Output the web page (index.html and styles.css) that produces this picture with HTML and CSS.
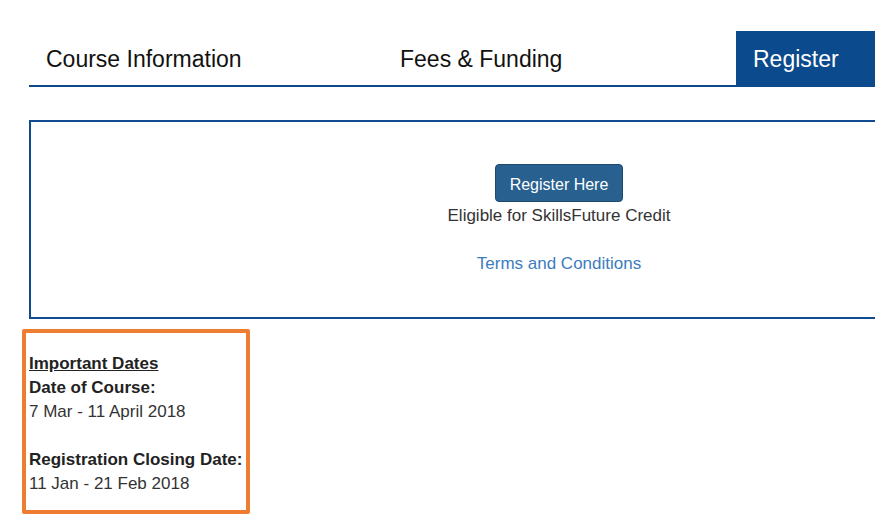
FILE: index.html
```html
<!DOCTYPE html>
<html>
<head>
<meta charset="utf-8">
<link rel="stylesheet" href="styles.css">
</head>
<body>
<div class="page">
  <nav class="tabs">
    <div class="tab">Course Information</div>
    <div class="tab">Fees &amp; Funding</div>
    <div class="tab active">Register</div>
  </nav>
  <section class="register-box">
    <button class="btn">Register Here</button>
    <div class="line">Eligible for SkillsFuture Credit</div>
    <div class="line blank">&nbsp;</div>
    <div class="line"><a class="link" href="#">Terms and Conditions</a></div>
  </section>
  <div class="dates">
    <div class="line"><b><u>Important Dates</u></b></div>
    <div class="line"><b>Date of Course:</b></div>
    <div class="line">7 Mar - 11 April 2018</div>
    <div class="line">&nbsp;</div>
    <div class="line"><b>Registration Closing Date:</b></div>
    <div class="line">11 Jan - 21 Feb 2018</div>
  </div>
</div>
</body>
</html>
```
FILE: styles.css
```css
html, body {
  margin: 0;
  padding: 0;
  background: #fff;
  overflow: hidden;
}
body {
  font-family: "Liberation Sans", Arial, sans-serif;
  color: #333;
  font-size: 17px;
  line-height: 24px;
}
.page {
  width: 1060px;
  padding: 31px 0 0 29px;
}
.tabs {
  display: grid;
  grid-template-columns: 354px 353px 353px;
  border-bottom: 2px solid #0c4a8c;
}
.tab {
  height: 54px;
  box-sizing: border-box;
  padding-top: 2px;
  display: flex;
  align-items: center;
  padding-left: 17px;
  font-size: 23px;
  color: #111;
}
.tab.active {
  background: #0b4a8c;
  color: #fff;
}
.register-box {
  margin-top: 33px;
  border: 2px solid #0f4b8e;
  padding-top: 42px;
  box-sizing: border-box;
  height: 199px;
  display: flex;
  flex-direction: column;
  align-items: center;
}
.btn {
  font-family: "Liberation Sans", Arial, sans-serif;
  font-size: 16px;
  line-height: 22px;
  white-space: nowrap;
  color: #fff;
  background: #286090;
  border: 1px solid #1f4a70;
  border-radius: 4px;
  padding: 9px 14px 5px;
  height: 38px;
  margin-bottom: 1px;
}
.line {
  white-space: nowrap;
}
.register-box .line {
  position: relative;
  top: 1px;
}
.link {
  color: #3d7cbd;
  text-decoration: none;
}
.dates {
  display: inline-block;
  margin: 10px 0 0 -7px;
  border: 4px solid #ed7d31;
  border-radius: 2px;
  padding: 19px 4px 14px 3px;
  color: #333;
}
.dates b {
  color: #222;
}
```
